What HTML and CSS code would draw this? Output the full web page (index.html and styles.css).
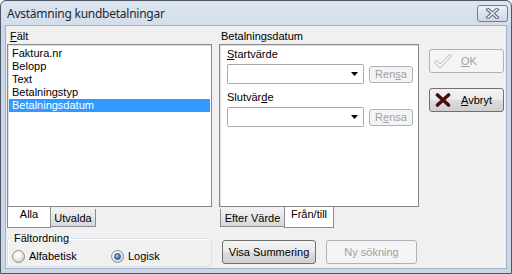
FILE: index.html
```html
<!DOCTYPE html>
<html>
<head>
<meta charset="utf-8">
<title>Avstämning kundbetalningar</title>
<link rel="stylesheet" href="styles.css">
</head>
<body>
<div class="window">
  <div class="titlebar">
    <span class="title">Avstämning kundbetalningar</span>
    <span class="close">
      <svg width="15" height="11" viewBox="0 0 15 11">
        <path d="M3 1.5 L12 9.5 M12 1.5 L3 9.5" stroke="#4b5668" stroke-width="3.4" stroke-linecap="square"/>
        <path d="M3 1.5 L12 9.5 M12 1.5 L3 9.5" stroke="#f3f5f8" stroke-width="1.6" stroke-linecap="square"/>
      </svg>
    </span>
  </div>

  <div class="client">
    <div class="col-left">
      <div class="label"><u>F</u>ält</div>
      <ul class="listbox">
        <li>Faktura.nr</li>
        <li>Belopp</li>
        <li>Text</li>
        <li>Betalningstyp</li>
        <li class="selected">Betalningsdatum</li>
      </ul>
      <div class="tabs">
        <span class="tab active tab-alla">Alla</span>
        <span class="tab tab-utvalda">Utvalda</span>
      </div>
      <fieldset class="group">
        <legend>Fältordning</legend>
        <div class="radios">
          <label class="radio first"><span class="dot"></span>Alfabetisk</label>
          <label class="radio checked"><span class="dot"></span>Logisk</label>
        </div>
      </fieldset>
    </div>

    <div class="col-mid">
      <div class="label label-mid">Betalningsdatum</div>
      <div class="panel">
        <div class="plabel"><u>S</u>tartvärde</div>
        <div class="row">
          <div class="combo">
            <svg width="8" height="4" viewBox="0 0 8 4"><path d="M0 0 H7 L3.5 4 Z" fill="#000"/></svg>
          </div>
          <button class="btn small" disabled>Ren<u>s</u>a</button>
        </div>
        <div class="plabel second">Slutvär<u>d</u>e</div>
        <div class="row">
          <div class="combo">
            <svg width="8" height="4" viewBox="0 0 8 4"><path d="M0 0 H7 L3.5 4 Z" fill="#000"/></svg>
          </div>
          <button class="btn small" disabled>R<u>e</u>nsa</button>
        </div>
      </div>
      <div class="tabs tabs-mid">
        <span class="tab tab-efter">Efter Värde</span>
        <span class="tab active tab-fran">Från/till</span>
      </div>
      <div class="actions">
        <button class="btn wide">Visa Summering</button>
        <button class="btn wide nysok" disabled>Ny sökning</button>
      </div>
    </div>

    <div class="col-right">
      <button class="btn big" disabled>
        <svg width="20" height="17" viewBox="0 0 20 17">
          <path d="M1.5 9.5 L4 7.5 L7 11 L17 1.5 L18.5 3 L7 15 Z" fill="#fafafa" stroke="#b4b4b4" stroke-width="1" stroke-linejoin="round"/>
        </svg>
        <span><u>O</u>K</span>
      </button>
      <button class="btn big">
        <svg width="16" height="14" viewBox="0 0 16 14">
          <path d="M2.5 2 L13.5 12 M13.5 2 L2.5 12" stroke="#4a0c0c" stroke-width="3.6" stroke-linecap="round"/>
        </svg>
        <span><u>A</u>vbryt</span>
      </button>
    </div>
  </div>
</div>
</body>
</html>
```

FILE: styles.css
```css
html, body {
  margin: 0;
  padding: 0;
}
body {
  background: #fff;
  font-family: "Liberation Sans", Arial, sans-serif;
  font-size: 11px;
  color: #000;
}

.window {
  box-sizing: border-box;
  width: 512px;
  height: 274px;
  border: 1px solid #4d5866;
  border-radius: 6px 6px 0 0;
  background: linear-gradient(#dce5ef, #d3deea 24px, #c9d7e7 25px, #c9d7e7);
  display: flex;
  flex-direction: column;
}

/* title bar */
.titlebar {
  height: 24px;
  display: flex;
  align-items: flex-start;
  padding: 0 3px 0 6px;
}
.title {
  margin-top: 5px;
  font-family: "Noto Sans", sans-serif;
  font-size: 12px;
  line-height: 16px;
  letter-spacing: -0.25px;
  color: #1f2732;
}
.close {
  box-sizing: border-box;
  margin: 4px 0 0 auto;
  width: 31px;
  height: 17px;
  border: 1px solid #707d8e;
  border-radius: 3px;
  background: linear-gradient(#eef2f7, #dbe3ee 50%, #cfd9e6);
  display: flex;
  align-items: center;
  justify-content: center;
}

/* client area */
.client {
  flex: 1;
  margin: 0 4px 4px 4px;
  border: 1px solid #a3b2c4;
  background: #f0f0f0;
  display: flex;
  padding-left: 1px;
}

.label {
  height: 18px;
  padding-top: 4px;
  box-sizing: border-box;
  line-height: 13px;
  padding-left: 3px;
}
.label-mid {
  padding-left: 2px;
}
u {
  text-decoration: underline;
  text-underline-offset: 1px;
}

.col-left {
  width: 205px;
  display: flex;
  flex-direction: column;
}
.col-mid {
  width: 200px;
  margin-left: 7px;
  display: flex;
  flex-direction: column;
}
.col-right {
  width: 75px;
  margin-left: 10px;
  padding-top: 23px;
  display: flex;
  flex-direction: column;
  gap: 15px;
}

/* list box */
.listbox {
  box-sizing: border-box;
  height: 163px;
  margin: 0;
  padding: 2px 0 0 0;
  list-style: none;
  background: #fff;
  border: 1px solid #828790;
  box-shadow: inset 1px 1px 0 #e0e0e0;
}
.listbox li {
  height: 13px;
  line-height: 13px;
  margin: 0 1px;
  padding-left: 3px;
}
.listbox li.selected {
  background: #3399ff;
  color: #fff;
}

/* bottom tabs */
.tabs {
  display: flex;
  align-items: flex-start;
  height: 21px;
}
.tab {
  box-sizing: border-box;
  line-height: 13px;
  text-align: center;
}
.tab.active {
  background: #fff;
  height: 21px;
  border: 1px solid #898c95;
  border-top: none;
  padding-top: 1px;
}
.tab:not(.active) {
  margin-top: 2px;
  height: 18px;
  padding-top: 3px;
  border: 1px solid #898c95;
  border-top: none;
  background: linear-gradient(#f2f2f2, #e6e6e6 50%, #d6d6d6);
}
.tab-alla {
  width: 44px;
}
.tab-utvalda {
  width: 45px;
  border-left: none !important;
}
.tabs-mid {
  margin-left: 1px;
}
.tab-efter {
  width: 64px;
  border-right: none !important;
}
.tab-fran {
  width: 50px;
}

/* group box */
.group {
  margin: 4px 0 0 0;
  padding: 1px 4px 0 4px;
  border: 1px solid #d5dfe5;
  border-radius: 3px;
  box-shadow: inset 1px 1px 0 #fff;
  height: 35px;
  box-sizing: border-box;
}
.group legend {
  padding: 0 2px;
  line-height: 13px;
}
.radios {
  display: flex;
  align-items: center;
  height: 20px;
}
.radio {
  display: flex;
  align-items: center;
}
.radio.first {
  width: 99px;
}
.dot {
  box-sizing: border-box;
  width: 13px;
  height: 13px;
  margin-right: 4px;
  border-radius: 50%;
  border: 1px solid #8e8f8f;
  background: radial-gradient(circle at 40% 35%, #ffffff 0, #f4f4f4 35%, #cfcfcf 80%);
  display: flex;
  align-items: center;
  justify-content: center;
}
.radio.checked .dot::after {
  content: "";
  width: 5px;
  height: 5px;
  border-radius: 50%;
  background: radial-gradient(circle at 40% 35%, #9ad1f5, #1d62a7 80%);
  border: 1px solid #1b4f85;
}

/* right panel */
.panel {
  box-sizing: border-box;
  height: 163px;
  background: #fff;
  border: 1px solid #828790;
  box-shadow: inset 1px 1px 0 #e0e0e0;
  padding: 3px 0 0 7px;
}
.plabel {
  line-height: 13px;
}
.plabel.second {
  margin-top: 7px;
}
.row {
  display: flex;
  align-items: center;
  margin-top: 3px;
}
.combo {
  box-sizing: border-box;
  width: 137px;
  height: 20px;
  border: 1px solid #abadb3;
  border-top-color: #a3a6ad;
  border-radius: 2px;
  background: #fff;
  display: flex;
  align-items: center;
  justify-content: flex-end;
  padding-right: 4px;
}

/* buttons */
.btn {
  box-sizing: border-box;
  font-family: "Liberation Sans", Arial, sans-serif;
  font-size: 11px;
  line-height: 13px;
  color: #000;
  border: 1px solid #707070;
  border-radius: 3px;
  background: linear-gradient(#f2f2f2, #ebebeb 50%, #dddddd 51%, #cfcfcf);
  padding: 0;
  margin: 0;
}
.btn:disabled {
  color: #a0a0a0;
  border-color: #adb2b5;
  background: #f4f4f4;
}
.btn.small {
  width: 44px;
  height: 17px;
  margin-left: 5px;
}
.actions {
  display: flex;
  margin-top: 12px;
  padding-left: 3px;
}
.btn.wide {
  height: 24px;
  width: 94px;
}
.btn.nysok {
  width: 91px;
  margin-left: 10px;
}
.btn.big {
  width: 75px;
  height: 24px;
  display: flex;
  align-items: center;
  padding-left: 3px;
  text-align: left;
}
.btn.big svg {
  width: 20px;
  flex: none;
}
.btn.big span {
  margin-left: 8px;
}
```
